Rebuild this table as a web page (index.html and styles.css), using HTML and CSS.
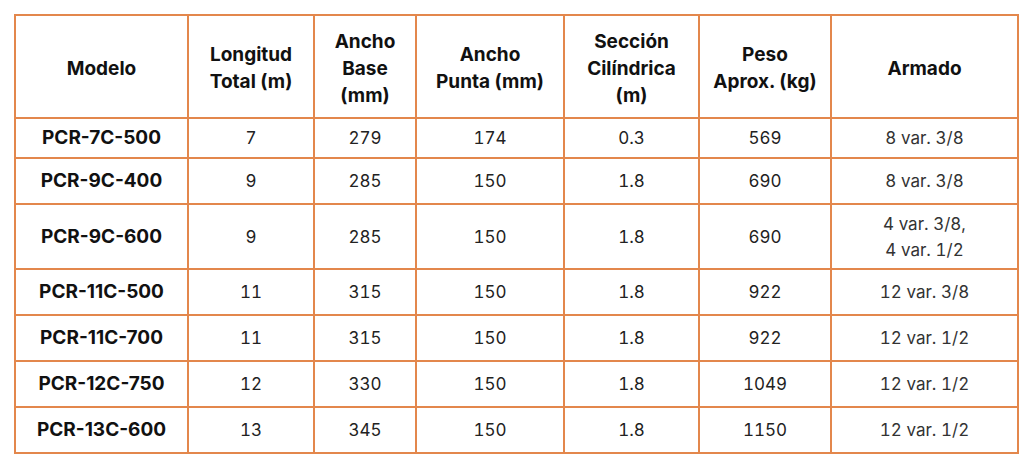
FILE: index.html
```html
<!DOCTYPE html>
<html lang="es">
<head>
<meta charset="utf-8">
<title>Tabla PCR</title>
<link rel="stylesheet" href="styles.css">
</head>
<body>
<div class="wrap">
<table class="spec">
  <colgroup>
    <col class="c1"><col class="c2"><col class="c3"><col class="c4"><col class="c5"><col class="c6"><col class="c7">
  </colgroup>
  <thead>
    <tr class="head">
      <th>Modelo</th>
      <th>Longitud<br>Total (m)</th>
      <th>Ancho<br>Base<br>(mm)</th>
      <th>Ancho<br>Punta (mm)</th>
      <th>Sección<br>Cilíndrica<br>(m)</th>
      <th>Peso<br>Aprox. (kg)</th>
      <th>Armado</th>
    </tr>
  </thead>
  <tbody>
    <tr class="r1"><td class="m">PCR-7C-500</td><td>7</td><td>279</td><td>174</td><td>0.3</td><td>569</td><td class="a">8 var. 3/8</td></tr>
    <tr class="r"><td class="m">PCR-9C-400</td><td>9</td><td>285</td><td>150</td><td>1.8</td><td>690</td><td class="a">8 var. 3/8</td></tr>
    <tr class="r2"><td class="m">PCR-9C-600</td><td>9</td><td>285</td><td>150</td><td>1.8</td><td>690</td><td class="a">4 var. 3/8,<br>4 var. 1/2</td></tr>
    <tr class="r"><td class="m">PCR-11C-500</td><td>11</td><td>315</td><td>150</td><td>1.8</td><td>922</td><td class="a">12 var. 3/8</td></tr>
    <tr class="r"><td class="m">PCR-11C-700</td><td>11</td><td>315</td><td>150</td><td>1.8</td><td>922</td><td class="a">12 var. 1/2</td></tr>
    <tr class="r"><td class="m">PCR-12C-750</td><td>12</td><td>330</td><td>150</td><td>1.8</td><td>1049</td><td class="a">12 var. 1/2</td></tr>
    <tr class="r"><td class="m">PCR-13C-600</td><td>13</td><td>345</td><td>150</td><td>1.8</td><td>1150</td><td class="a">12 var. 1/2</td></tr>
  </tbody>
</table>
</div>
</body>
</html>
```

FILE: styles.css
```css
html, body {
  margin: 0;
  padding: 0;
  background: #ffffff;
}
.wrap {
  padding: 14px 0 0 14px;
}
.spec {
  border-collapse: collapse;
  table-layout: fixed;
  width: 1003px;
  font-family: Inter, "Liberation Sans", sans-serif;
  color: #1a1a1a;
}
.c1 { width: 173px; }
.c2 { width: 126px; }
.c3 { width: 102px; }
.c4 { width: 148px; }
.c5 { width: 135px; }
.c6 { width: 132px; }
.c7 { width: 187px; }
.spec th, .spec td {
  border: 2px solid #e3874c;
  text-align: center;
  vertical-align: middle;
  padding: 0 2px;
}
.spec th {
  font-weight: 700;
  font-size: 19px;
  line-height: 27px;
  color: #111;
  height: 103px;
  box-sizing: border-box;
  padding-top: 3px;
}
.spec td {
  font-size: 17px;
  line-height: 26px;
  font-weight: 400;
  color: #222;
  font-variant-numeric: tabular-nums;
}
.spec td.m {
  font-weight: 700;
  color: #111;
  font-size: 19px;
  font-variant-numeric: normal;
}
.spec td.a {
  color: #333;
}
.r1 td { height: 40px; box-sizing: border-box; }
.r td { height: 46px; box-sizing: border-box; }
.r2 td { height: 65px; box-sizing: border-box; }
```
